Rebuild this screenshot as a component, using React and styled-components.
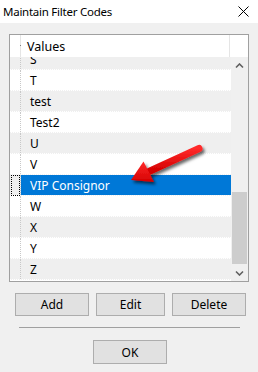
import React from 'react';
import styled, { createGlobalStyle } from 'styled-components';

const GlobalStyle = createGlobalStyle`
  html, body {
    margin: 0;
    padding: 0;
    background: #f0f0f0;
  }
  body {
    font-family: "Noto Sans", "Open Sans", Arial, sans-serif;
    font-size: 12px;
    color: #000;
  }
`;

const codes = ['S', 'T', 'test', 'Test2', 'U', 'V', 'VIP Consignor', 'W', 'X', 'Y', 'Z'];
const selectedCode = 'VIP Consignor';

const Chevron = ({ down }) => (
  <svg width="9" height="6" viewBox="0 0 9 6">
    <path
      d={down ? 'M1 1.5 L4.5 5 L8 1.5' : 'M1 4.5 L4.5 1 L8 4.5'}
      fill="none"
      stroke="#606060"
      strokeWidth="1.6"
    />
  </svg>
);

const Arrow = () => (
  <ArrowSvg width="90" height="60" viewBox="120 135 90 60">
    <defs>
      <filter id="shadow" x="-20%" y="-20%" width="150%" height="160%">
        <feDropShadow dx="2" dy="2.5" stdDeviation="1.4" floodColor="#000" floodOpacity="0.6" />
      </filter>
      <linearGradient id="red" x1="0" y1="0" x2="0" y2="1">
        <stop offset="0" stopColor="#ff2a2a" />
        <stop offset="1" stopColor="#d40000" />
      </linearGradient>
    </defs>
    <g filter="url(#shadow)">
      <line x1="199" y1="148.5" x2="150" y2="171" stroke="url(#red)" strokeWidth="7" strokeLinecap="round" />
      <polygon points="131,180 143.5,161.5 154,182" fill="url(#red)" />
    </g>
  </ArrowSvg>
);

const App = () => {
  return (
    <Window>
      <GlobalStyle />
      <TitleBar>
        <span>Maintain Filter Codes</span>
        <svg width="11" height="11" viewBox="0 0 11 11">
          <path d="M0.5 0.5 L10.5 10.5 M10.5 0.5 L0.5 10.5" stroke="#000" strokeWidth="1" />
        </svg>
      </TitleBar>
      <Body>
        <Grid>
          <Header>
            <HeaderRowCell />
            <HeaderCell>Values</HeaderCell>
            <HeaderCorner />
          </Header>
          <GridBody>
            <RowsViewport>
              <RowList>
                {codes.map((code, i) => (
                  <Row key={code} $alt={i % 2 === 0}>
                    <RowHeader>{code === selectedCode && <FocusBox />}</RowHeader>
                    <Cell $selected={code === selectedCode}>{code}</Cell>
                  </Row>
                ))}
              </RowList>
            </RowsViewport>
            <ScrollBar>
              <ScrollButton>
                <Chevron />
              </ScrollButton>
              <Track>
                <Thumb />
              </Track>
              <ScrollButton>
                <Chevron down />
              </ScrollButton>
            </ScrollBar>
          </GridBody>
        </Grid>
        <ButtonRow>
          <Button $w={74}>Add</Button>
          <Button $w={69}>Edit</Button>
          <Button $w={74}>Delete</Button>
        </ButtonRow>
        <Separator />
        <Footer>
          <Button $w={74} $h={24}>OK</Button>
        </Footer>
      </Body>
      <Arrow />
    </Window>
  );
};

const Window = styled.div`
  position: relative;
  width: 258px;
  height: 372px;
  background: #f0f0f0;
  overflow: hidden;
`;

const TitleBar = styled.div`
  height: 23px;
  background: #fff;
  display: flex;
  align-items: center;
  justify-content: space-between;
  padding: 0 9px 0 3px;
  font-size: 11.5px;
  letter-spacing: -0.25px;
  span {
    margin-top: -1px;
  }
`;

const Body = styled.div`
  padding: 11px 0 0 9px;
`;

const Grid = styled.div`
  width: 238px;
  height: 246px;
  border: 1px solid #a0a0a0;
  background: #fff;
  display: flex;
  flex-direction: column;
`;

const Header = styled.div`
  height: 22px;
  display: flex;
  background: #fff;
`;

const HeaderRowCell = styled.div`
  width: 10px;
  border-right: 1px solid #e5e5e5;
  position: relative;
  &:after {
    content: '';
    position: absolute;
    right: -1px;
    top: 10px;
    width: 1px;
    height: 1px;
    background: #808080;
  }
`;

const HeaderCell = styled.div`
  width: 209px;
  border-right: 1px solid #e5e5e5;
  padding-left: 6px;
  display: flex;
  align-items: center;
  font-size: 12.5px;
  box-sizing: border-box;
`;

const HeaderCorner = styled.div`
  flex: 1;
`;

const GridBody = styled.div`
  flex: 1;
  display: flex;
  min-height: 0;
`;

const RowsViewport = styled.div`
  width: 221px;
  overflow: hidden;
`;

const RowList = styled.div`
  margin-top: -8px;
`;

const Row = styled.div`
  height: 21px;
  display: flex;
  background: ${(p) => (p.$alt ? '#efefef' : '#fff')};
  box-sizing: border-box;
  border-bottom: 1px dotted ${(p) => (p.$alt ? '#fff' : '#f0f0f0')};
`;

const RowHeader = styled.div`
  width: 10px;
  border-right: 1px dotted #c8c8c8;
  position: relative;
`;

const FocusBox = styled.div`
  position: absolute;
  left: 1px;
  top: 0;
  width: 9px;
  height: 21px;
  box-sizing: border-box;
  border: 1px dotted #000;
`;

const Cell = styled.div`
  flex: 1;
  padding-left: 9px;
  display: flex;
  align-items: center;
  font-size: 12px;
  background: ${(p) => (p.$selected ? '#0078d7' : 'transparent')};
  color: ${(p) => (p.$selected ? '#fff' : '#000')};
`;

const ScrollBar = styled.div`
  width: 17px;
  background: #f0f0f0;
  display: flex;
  flex-direction: column;
`;

const ScrollButton = styled.div`
  height: 17px;
  display: flex;
  align-items: center;
  justify-content: center;
`;

const Track = styled.div`
  flex: 1;
  display: flex;
  flex-direction: column;
  justify-content: flex-end;
  padding: 0 1px;
`;

const Thumb = styled.div`
  height: 72px;
  background: #cdcdcd;
`;

const ButtonRow = styled.div`
  display: flex;
  gap: 7px;
  margin: 11px 0 0 6px;
`;

const Button = styled.button`
  width: ${(p) => p.$w}px;
  height: ${(p) => p.$h || 23}px;
  background: #e1e1e1;
  border: 1px solid #adadad;
  border-radius: 0;
  padding: 0;
  font-family: "Noto Sans", "Open Sans", Arial, sans-serif;
  font-size: 12px;
  color: #000;
`;

const Separator = styled.div`
  width: 221px;
  height: 1px;
  background: #a0a0a0;
  margin: 11px 0 0 10px;
`;

const Footer = styled.div`
  display: flex;
  margin: 12px 0 0 84px;
`;

const ArrowSvg = styled.svg`
  position: absolute;
  left: 120px;
  top: 135px;
  pointer-events: none;
`;

export default App;
